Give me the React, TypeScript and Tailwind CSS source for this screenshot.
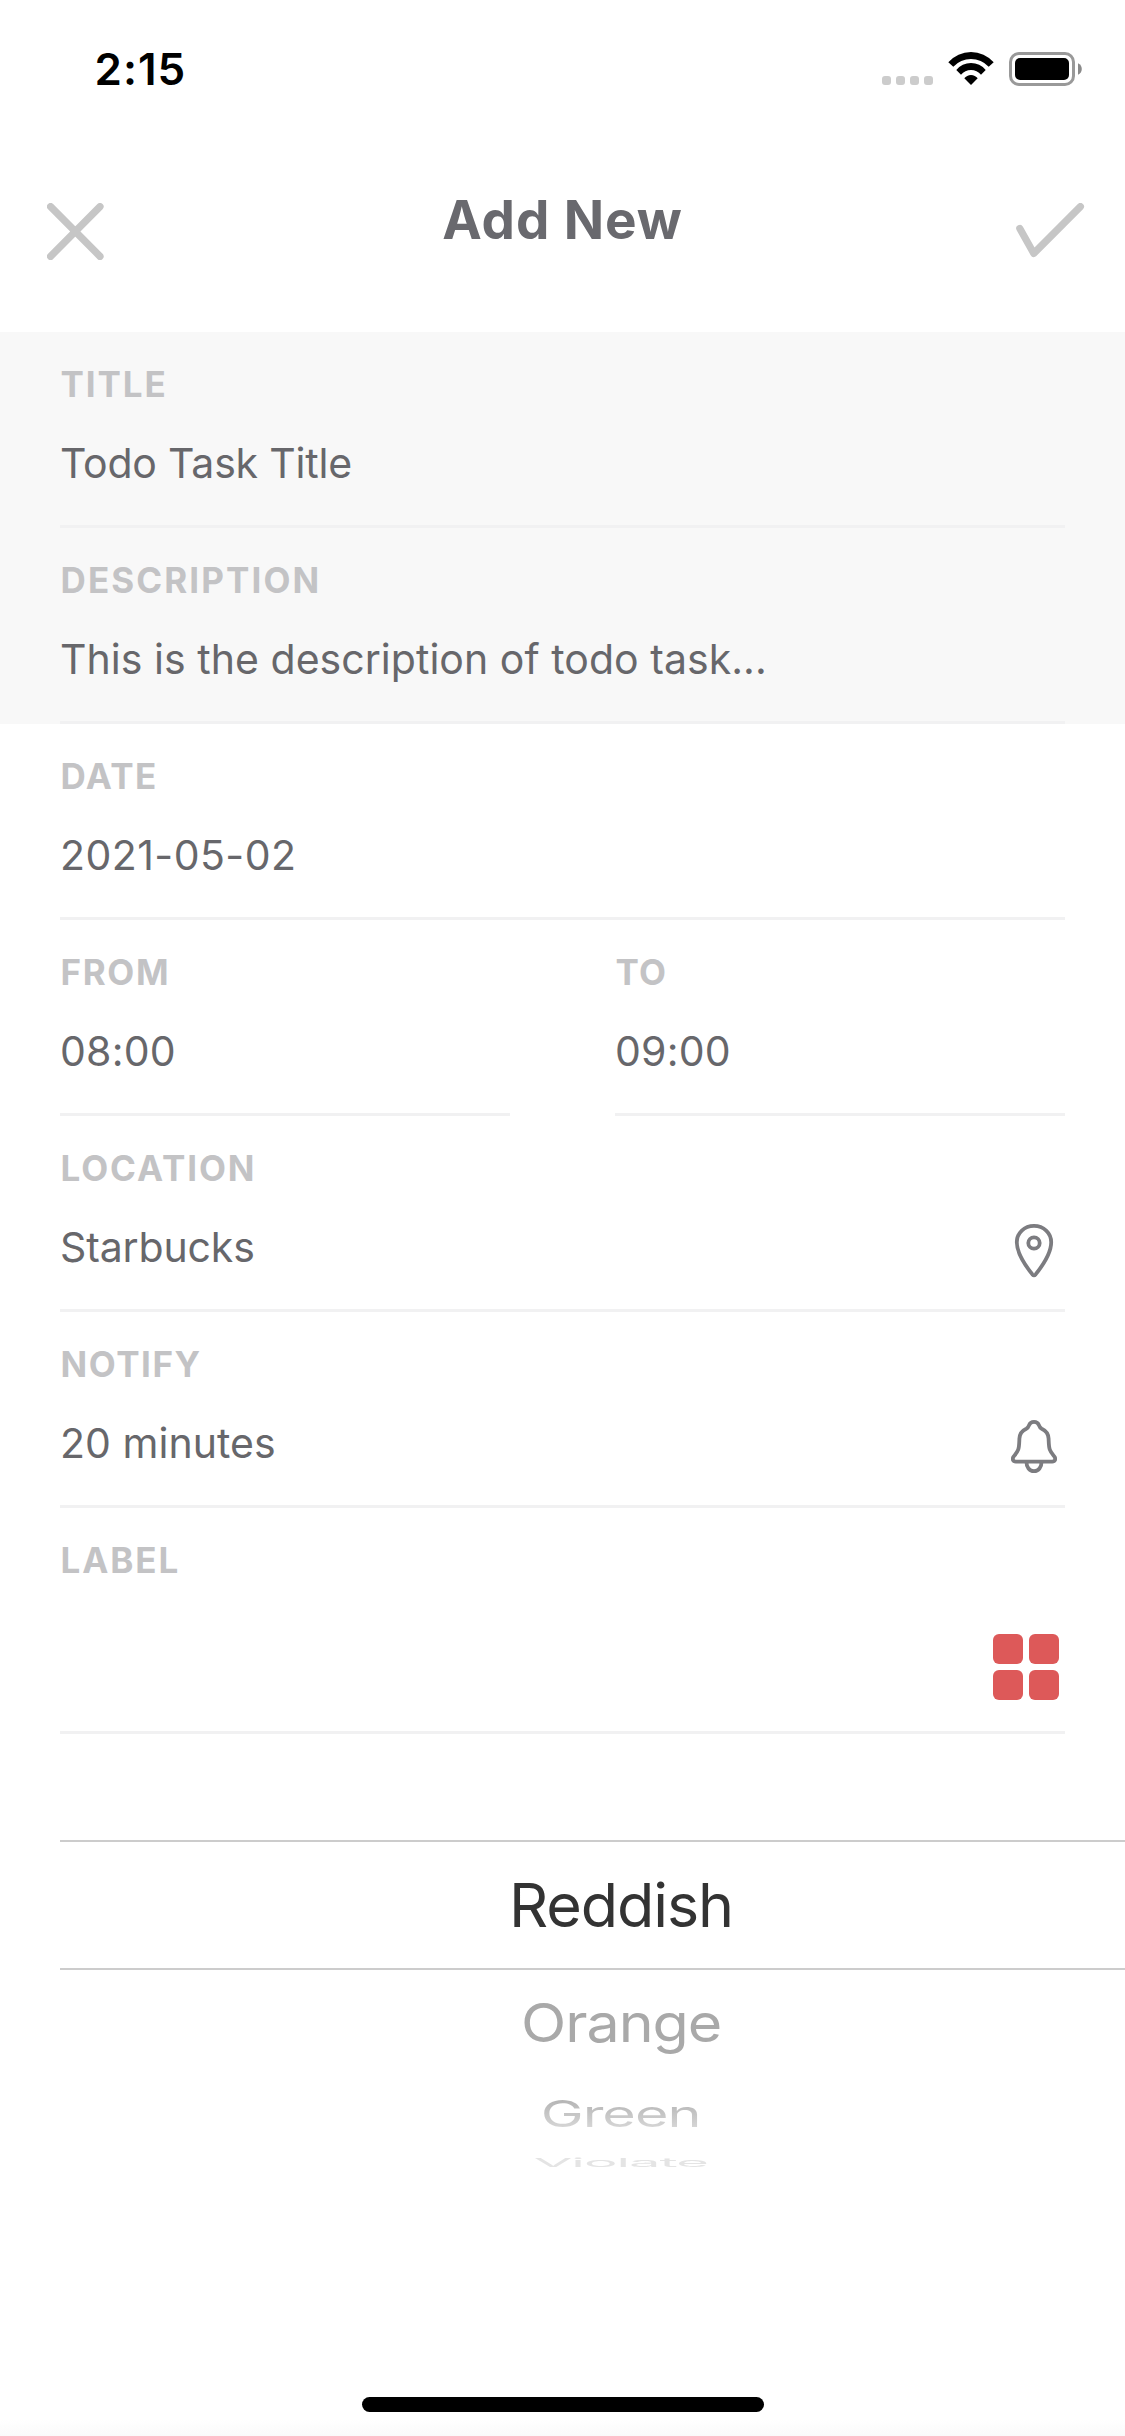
import type { ReactNode } from "react";

function StatusBar() {
  return (
    <div className="flex h-[138px] items-center justify-between pl-[94.5px] pr-[43px]">
      <span className="text-[44px] leading-[44px] font-semibold tracking-[0.98px] text-black">2:15</span>
      <div className="flex h-[34px] items-start">
        <div className="mt-6 flex gap-[5px]">
          {[0, 1, 2, 3].map((i) => (
            <span key={i} className="size-[9px] rounded-[3px] bg-[#cccccc]" />
          ))}
        </div>
        <svg className="ml-[15px] h-[34px] w-[46px]" viewBox="0 0 46 34" fill="#000">
          <path d="M0.3 10.3A30.2 30.2 0 0 1 45.7 10.3L40.7 14.7A24.2 24.2 0 0 0 5.3 14.7Z" />
          <path d="M8.3 18A18.9 18.9 0 0 1 37.7 18L33 22.7A13 13 0 0 0 13 22.7Z" />
          <path d="M16.3 26.3A8.5 8.5 0 0 1 29.7 26.3L23 33Z" />
        </svg>
        <svg className="ml-[15px] h-[34px] w-[73px]" viewBox="0 0 73 34">
          <rect x="1.5" y="1.5" width="63" height="31" rx="8.5" fill="none" stroke="#999" strokeWidth="3" />
          <rect x="6" y="6" width="54" height="22" rx="5" fill="#000" />
          <path d="M69 11.2C71.4 12.2 72.8 14.4 72.8 17S71.4 21.8 69 22.8Z" fill="#8a8a8a" />
        </svg>
      </div>
    </div>
  );
}

function Header() {
  return (
    <header className="h-[332px]">
      <StatusBar />
      <div className="grid grid-cols-[1fr_auto_1fr] items-start pt-[54px]">
        <svg className="mt-[11px] ml-[46.5px] size-[57px]" viewBox="0 0 57 57" fill="none" stroke="#c6c6c6" strokeWidth="7.2" strokeLinecap="round">
          <path d="M3.6 3.6L53 53.4M53 3.6L3.6 53.4" />
        </svg>
        <h1 className="text-[53px] leading-[56px] font-bold tracking-[0.9px] text-[#69696e]">Add New</h1>
        <svg
          className="mt-[11px] mr-[40px] h-[57px] w-[69px] justify-self-end"
          viewBox="0 0 69 57"
          fill="none"
          stroke="#c6c6c6"
          strokeWidth="7.2"
          strokeLinecap="round"
          strokeLinejoin="round"
        >
          <path d="M3.8 25.4L17.8 50.4L64.4 3.6" />
        </svg>
      </div>
    </header>
  );
}

type FieldProps = { label: string; value: string; labelClass: string; valueClass: string; icon?: ReactNode };

function Field({ label, value, labelClass, valueClass, icon }: FieldProps) {
  return (
    <div className="h-[196px] flex-1 border-b-[3px] border-[#f1f1f2] pt-8">
      <div className={`pl-[0.5px] text-[35px] leading-10 font-bold text-[#c3c3c5] ${labelClass}`}>{label}</div>
      <div className="mt-[35px] flex items-start justify-between pr-2">
        <span className={`text-[41px] leading-[48px] whitespace-nowrap text-[#67676b] ${valueClass}`}>{value}</span>
        {icon}
      </div>
    </div>
  );
}

function PinIcon() {
  return (
    <svg className="mt-px h-[54px] w-[46px]" viewBox="0 0 46 54" fill="none" stroke="#7c7c80" strokeWidth="3.8">
      <path d="M23 1.9C13.4 1.9 5.8 8.8 5.8 18.3C5.8 29 13.6 40.7 21.4 50.4Q23 52.2 24.6 50.4C32.4 40.7 40.2 29 40.2 18.3C40.2 8.8 32.6 1.9 23 1.9Z" />
      <circle cx="23" cy="19" r="5.7" />
    </svg>
  );
}

function BellIcon() {
  return (
    <svg className="mt-px h-[54px] w-[46px]" viewBox="0 0 46 54" fill="none" stroke="#7c7c80" strokeWidth="3.8" strokeLinejoin="round">
      <path d="M23 1.9C20.6 1.9 18.8 3.2 18.1 5.2C17.5 7 16.9 7.9 15.3 8.7C10.8 10.8 8.6 14 8.4 18.6C8.2 23 8.3 26.5 7.2 29.6C6.2 32.3 4.4 34.3 2.6 36.6C0.9 39 2 41.6 4.8 41.6H41.2C44 41.6 45.1 39 43.4 36.6C41.6 34.3 39.8 32.3 38.8 29.6C37.7 26.5 37.8 23 37.6 18.6C37.4 14 35.2 10.8 30.7 8.7C29.1 7.9 28.5 7 27.9 5.2C27.2 3.2 25.4 1.9 23 1.9Z" />
      <path d="M15.5 42C15.4 47.2 18.4 51.2 23 51.2S30.6 47.2 30.5 42" />
    </svg>
  );
}

function LabelField() {
  return (
    <div className="h-[226px] border-b-[3px] border-[#f1f1f2] pt-8">
      <div className="pl-[0.5px] text-[35px] leading-10 font-bold tracking-[1.92px] text-[#c3c3c5]">LABEL</div>
      <div className="mt-[54px] mr-[6px] ml-auto grid w-[66px] grid-cols-2 gap-[6px]">
        {[0, 1, 2, 3].map((i) => (
          <span key={i} className="h-[30px] rounded-[6px] bg-[#dd5959]" />
        ))}
      </div>
    </div>
  );
}

function ColorPicker() {
  return (
    <div className="mt-[106px] ml-[60px] overflow-hidden">
      <div className="w-[1125px] text-[61px] leading-[61px] tracking-[-1.1px]">
        <div className="flex h-[130px] items-center justify-center border-y-2 border-[#cccccc] pr-[3px] text-[#333333]">
          Reddish
        </div>
        <div className="flex h-[106px] items-center justify-center pr-[3px] text-[#a9a9a9]">
          <span className="scale-x-[0.97] scale-y-[0.88]">Orange</span>
        </div>
        <div className="flex h-[76px] items-center justify-center pr-[4px]">
          <span className="scale-x-[0.944] scale-y-[0.6] bg-linear-to-b from-[#b6b6b6] from-[14%] to-[#d6d6d6] to-[86%] bg-clip-text text-transparent">
            Green
          </span>
        </div>
        <div className="flex h-[20px] items-center justify-center pr-[4px] text-[#e4e4e4]">
          <span className="scale-x-[0.919] scale-y-[0.2]">Violate</span>
        </div>
      </div>
    </div>
  );
}

export default function App() {
  return (
    <div className="flex h-[2436px] w-[1125px] flex-col overflow-hidden bg-white font-['Inter',sans-serif]">
      <Header />
      <div className="bg-[#f8f8f8] px-[60px]">
        <Field label="TITLE" value="Todo Task Title" labelClass="tracking-[1.89px]" valueClass="tracking-[-0.2px]" />
        <Field
          label="DESCRIPTION"
          value="This is the description of todo task..."
          labelClass="tracking-[2.1px]"
          valueClass="tracking-[0.04px]"
        />
      </div>
      <div className="px-[60px]">
        <Field label="DATE" value="2021-05-02" labelClass="tracking-[1.44px]" valueClass="tracking-[0.45px]" />
        <div className="flex gap-[105px]">
          <Field label="FROM" value="08:00" labelClass="tracking-[1.63px]" valueClass="tracking-[0.2px]" />
          <Field label="TO" value="09:00" labelClass="tracking-[1.25px]" valueClass="tracking-[0.2px]" />
        </div>
        <Field
          label="LOCATION"
          value="Starbucks"
          labelClass="tracking-[1.92px]"
          valueClass="tracking-[-0.14px]"
          icon={<PinIcon />}
        />
        <Field label="NOTIFY" value="20 minutes" labelClass="tracking-[1.55px]" valueClass="tracking-[0.04px]" icon={<BellIcon />} />
        <LabelField />
      </div>
      <ColorPicker />
      <div className="mx-auto mt-auto h-[15px] w-[402px] shrink-0 rounded-full bg-black" />
      <div className="mt-2 h-4 shrink-0 bg-linear-to-b from-white to-[#fafafa]" />
    </div>
  );
}
